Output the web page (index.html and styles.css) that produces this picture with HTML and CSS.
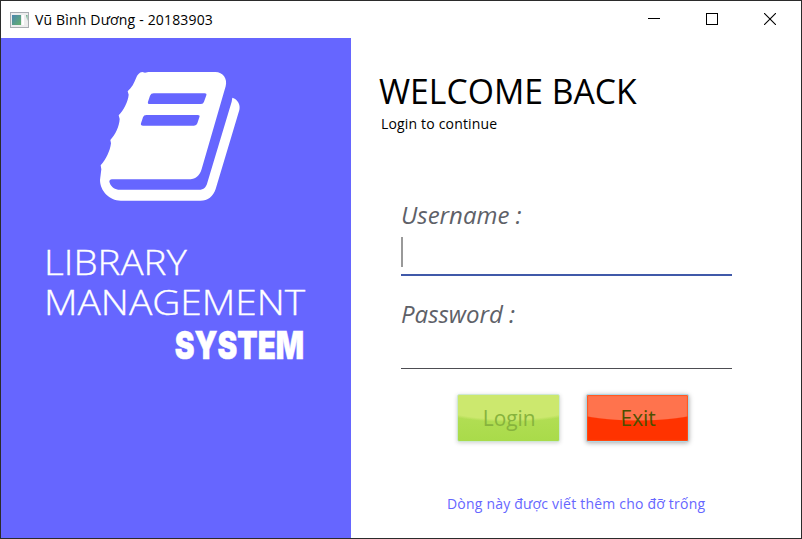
FILE: index.html
```html
<!DOCTYPE html>
<html lang="vi">
<head>
<meta charset="utf-8">
<title>Vũ Bình Dương - 20183903</title>
<link rel="stylesheet" href="styles.css">
</head>
<body>
<div class="window">
  <header class="titlebar">
    <svg class="app-icon" width="19" height="16" viewBox="0 0 19 16">
      <defs><linearGradient id="pane" x1="0" y1="0" x2="1" y2="1"><stop offset="0" stop-color="#4b85b0"/><stop offset="1" stop-color="#63b16c"/></linearGradient></defs>
      <rect x=".5" y=".5" width="18" height="15" fill="#ededee" stroke="#a9adb2"/>
      <rect x="2" y="3" width="9" height="10" fill="url(#pane)"/>
      <rect x="12" y="3" width="2" height="10" fill="#fff"/>
      <path d="M16 3h1.500v6z" fill="#67aa86"/>
    </svg>
    <span class="title">Vũ Bình Dương - 20183903</span>
    <div class="controls">
      <svg width="12" height="12"><path d="M0 5.500h12" stroke="#000"/></svg>
      <svg width="12" height="12"><rect x=".5" y=".5" width="11" height="11" fill="none" stroke="#000"/></svg>
      <svg width="12" height="12"><path d="M0 0L12 12M12 0L0 12" stroke="#000" stroke-width="1.100"/></svg>
    </div>
  </header>
  <main class="content">
    <section class="brand">
      <svg class="book" width="170" height="160" viewBox="0 0 510 480">
        <path fill="#fff" fill-rule="evenodd" d="M172 51L180 53L190 51H391C414 51 428 71 422 94L350 342C344 363 332 373 309 373H84C74 373 72 377 74 383C79 397 90 404 105 404H342C357 404 363 397 367 383L440 140L442 128C458 133 467 148 463 165L392 402C384 425 369 437 346 437H107C74 437 45 408 45 375L49 343L47 331C63 314 75 288 78 265L76 255C91 239 103 214 104 192L101 181C116 165 129 140 131 119L128 109C141 98 147 84 153 70C157 59 163 52 172 51ZM206 115Q198 115 195 122L189 140Q187 147 194 147H348Q355 147 357 140L364 121Q366 115 359 115ZM184 180Q176 180 174 187L168 205Q166 212 174 212H327Q335 212 337 205L343 187Q346 180 338 180Z"/>
      </svg>
      <h1 class="name">
        <span class="library">LIBRARY</span>
        <span class="management">MANAGEMENT</span>
        <span class="system">SYSTEM</span>
      </h1>
    </section>
    <section class="login">
      <h2 class="welcome">WELCOME BACK</h2>
      <p class="subtitle">Login to continue</p>
      <form class="form">
        <div class="field focused"><span class="label">Username :</span><div class="entry"><i class="caret"></i></div></div>
        <div class="field"><span class="label">Password :</span><div class="entry"></div></div>
      </form>
      <div class="actions">
        <button class="btn btn-login" type="button"><span>Login</span></button>
        <button class="btn btn-exit" type="button"><span>Exit</span></button>
      </div>
      <p class="note">Dòng này được viết thêm cho đỡ trống</p>
    </section>
  </main>
</div>
</body>
</html>
```
FILE: styles.css
```css
* { box-sizing: border-box; }
body { margin: 0; font-family: "Open Sans", "Noto Sans", sans-serif; color: #000; }
h1, h2, p { margin: 0; font-weight: 400; white-space: nowrap; }
svg { display: block; }
.window { width: 802px; height: 539px; border: 1px solid #2b2b2b; background: #fff; display: flex; flex-direction: column; }
.titlebar { height: 37px; flex: none; display: flex; align-items: center; padding: 0 24px 0 9px; }
.app-icon { margin-right: 6px; }
.title { font-size: 14px; line-height: 20px; letter-spacing: 0.17px; }
.controls { display: flex; gap: 46px; margin: 0 1px 2px auto; }
.content { display: grid; grid-template-columns: 350px 1fr; flex: 1; }
.brand { background: #6666ff; color: #fff; padding-top: 17px; }
.book { margin-left: 84px; }
.name { margin: 27px 0 0 43px; width: 260px; display: flex; flex-direction: column; font-size: 35px; line-height: 40px; }
.library, .management { align-self: flex-start; font-weight: 300; -webkit-text-stroke: .35px #fff; transform: scaleX(1.11); transform-origin: left; }
.library { transform: scaleX(1.1); }
.system { font-family: Inter, sans-serif; font-weight: 900; font-size: 39px; line-height: 46px; transform: scaleX(.76); transform-origin: right; align-self: flex-end; -webkit-text-stroke: .5px #fff; }
.login { padding-top: 31px; display: flex; flex-direction: column; }
.welcome { align-self: flex-start; margin-left: 28px; font-size: 35px; line-height: 44px; transform: scaleX(.963); transform-origin: left; }
.subtitle { margin: 1px 0 0 30px; font-size: 14px; line-height: 20px; letter-spacing: .17px; }
.form { margin: 65px 0 0 50px; width: 331px; }
.field + .field { margin-top: 22px; }
.label { display: block; font-size: 24px; line-height: 32px; font-style: italic; color: #5e6168; }
.entry { height: 39px; border-bottom: 1px solid #4d4d52; }
.focused .entry { height: 45px; border-bottom: 2px solid #4059a9; padding-top: 6px; }
.caret { display: block; width: 2px; height: 30px; background: #999; }
.actions { display: flex; gap: 26px; margin: 25px 0 0 106px; }
.btn { width: 103px; height: 48px; padding: 0 0 0 2px; border: 1px solid #add8e6; border-radius: 2px; font: 21.5px/30px "Open Sans", sans-serif; box-shadow: 0 1px 5px rgba(0,0,0,.35); }
.btn span { display: inline-block; transform: scaleX(.97); }
.btn-login { border-color: #cde8d3; color: #87b33d; background: radial-gradient(ellipse 95px 27px at 50% 0, #cce86e 0 90%, transparent 100%), linear-gradient(#b9e05c, #a9db4a); box-shadow: 0 1px 4px rgba(0,0,0,.18); }
.btn-exit { color: #4d5000; background: radial-gradient(ellipse 95px 26px at 50% 0, #ff734d 0 96%, transparent 100%), #ff3300; box-shadow: inset 0 0 1px 1px rgba(255,80,20,.8), 0 1px 5px rgba(0,0,0,.35); }
.note { margin: 52px 0 0 96px; font-size: 14px; line-height: 20px; color: #6666ff; letter-spacing: .21px; }
```
